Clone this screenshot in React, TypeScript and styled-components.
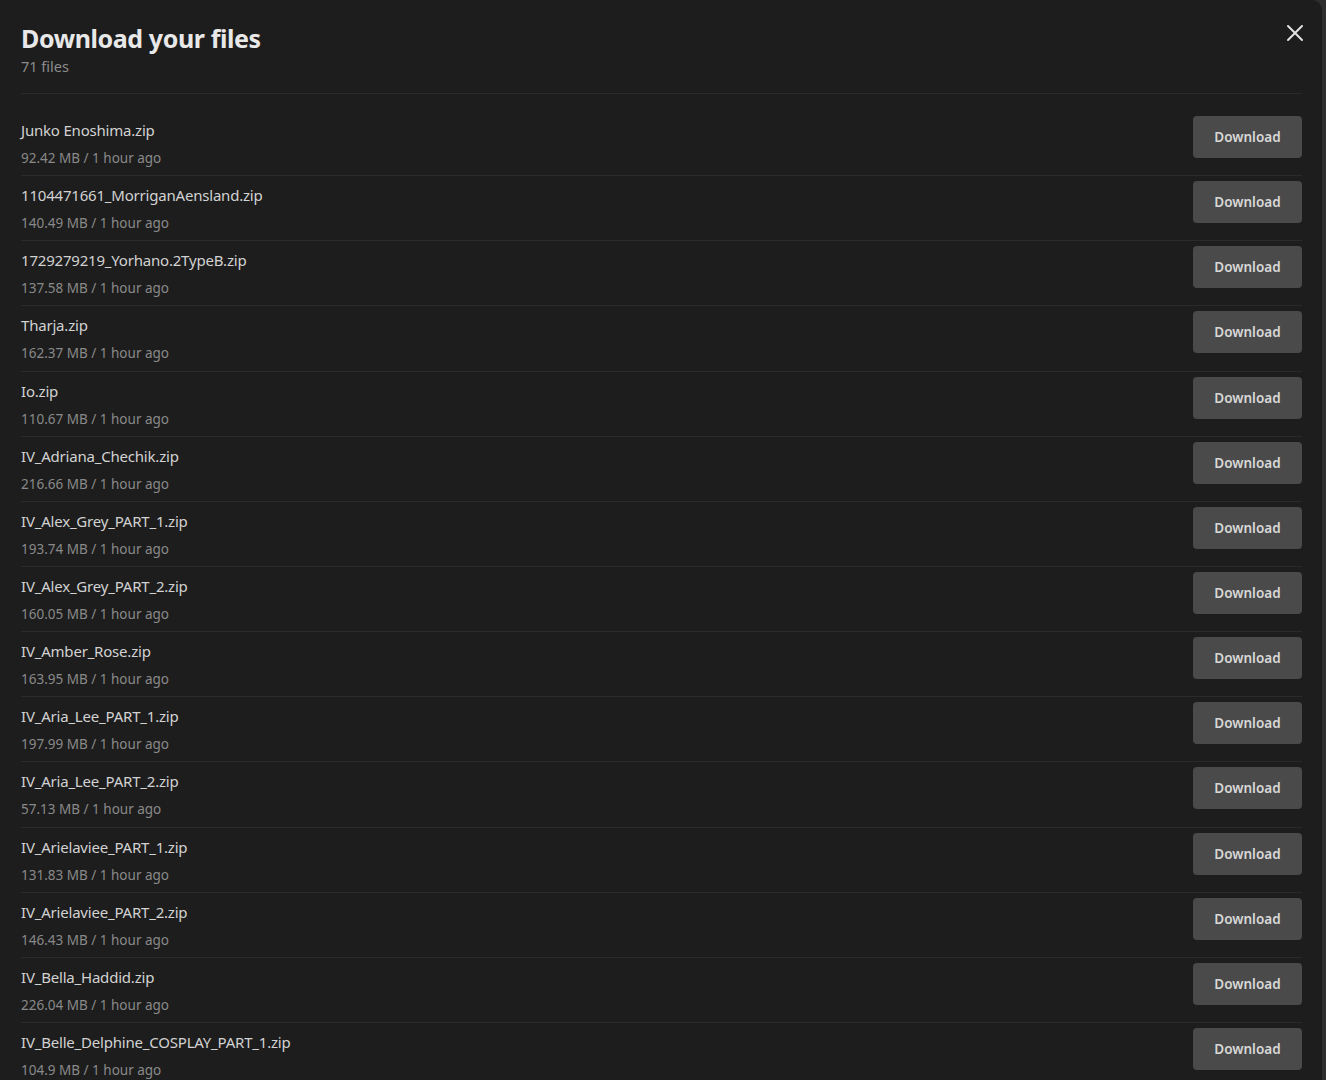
import React from 'react';
import styled, { createGlobalStyle } from 'styled-components';

const GlobalStyle = createGlobalStyle`
    html,
    body {
        margin: 0;
        padding: 0;
        height: 100%;
        overflow: hidden;
        background: #2e2e2e;
    }

    * {
        box-sizing: border-box;
    }
`;

const Modal = styled.div`
    width: 1322px;
    height: 100vh;
    background: #1d1d1d;
    border-top-right-radius: 10px;
    padding: 0 20px 0 21px;
    overflow: hidden;
    font-family: 'Noto Sans', 'Open Sans', sans-serif;
    color: #d4d4d4;
`;

const Header = styled.div`
    display: flex;
    justify-content: space-between;
    align-items: flex-start;
    padding: 21px 0 17px;
    border-bottom: 1px solid #2a2a2a;
`;

const Title = styled.h2`
    margin: 0;
    font-size: 25px;
    line-height: 34px;
    font-weight: 700;
    color: #e8e8e8;
    letter-spacing: -0.4px;
`;

const Count = styled.div`
    margin-top: 1px;
    font-size: 14.5px;
    line-height: 20px;
    color: #8c8c8c;
`;

const CloseButton = styled.button`
    margin: 3px -2px 0 0;
    padding: 0;
    width: 18px;
    height: 18px;
    border: none;
    background: none;
    color: #e2e2e2;
    cursor: pointer;
    display: flex;
    align-items: center;
    justify-content: center;
`;

const List = styled.ul`
    list-style: none;
    margin: 0;
    padding: 17px 0 0;
`;

const Row = styled.li`
    display: flex;
    justify-content: space-between;
    align-items: flex-start;
    height: 65.15px;
    padding-top: 5px;

    & + & {
        border-top: 1px solid #2a2a2a;
    }

    &:first-child {
        height: 64.15px;
    }
`;

const FileInfo = styled.div`
    padding-top: 2px;
    min-width: 0;
`;

const FileName = styled.div`
    font-size: 15px;
    line-height: 24px;
    color: #d2d2d2;
    letter-spacing: -0.2px;
`;

const FileMeta = styled.div`
    margin-top: 2px;
    font-size: 13.5px;
    line-height: 28px;
    color: #898989;
`;

const DownloadButton = styled.button`
    width: 109px;
    height: 42px;
    border: none;
    border-radius: 4px;
    background: #4a4a4a;
    color: #d8d8d8;
    font-family: 'Noto Sans', 'Open Sans', sans-serif;
    font-size: 13.5px;
    font-weight: 600;
    cursor: pointer;
    flex-shrink: 0;
`;

interface IFile {
    name: string;
    size: string;
}

const files: IFile[] = [
    { name: 'Junko Enoshima.zip', size: '92.42 MB' },
    { name: '1104471661_MorriganAensland.zip', size: '140.49 MB' },
    { name: '1729279219_Yorhano.2TypeB.zip', size: '137.58 MB' },
    { name: 'Tharja.zip', size: '162.37 MB' },
    { name: 'Io.zip', size: '110.67 MB' },
    { name: 'IV_Adriana_Chechik.zip', size: '216.66 MB' },
    { name: 'IV_Alex_Grey_PART_1.zip', size: '193.74 MB' },
    { name: 'IV_Alex_Grey_PART_2.zip', size: '160.05 MB' },
    { name: 'IV_Amber_Rose.zip', size: '163.95 MB' },
    { name: 'IV_Aria_Lee_PART_1.zip', size: '197.99 MB' },
    { name: 'IV_Aria_Lee_PART_2.zip', size: '57.13 MB' },
    { name: 'IV_Arielaviee_PART_1.zip', size: '131.83 MB' },
    { name: 'IV_Arielaviee_PART_2.zip', size: '146.43 MB' },
    { name: 'IV_Bella_Haddid.zip', size: '226.04 MB' },
    { name: 'IV_Belle_Delphine_COSPLAY_PART_1.zip', size: '104.9 MB' }
];

const CloseIcon = () => (
    <svg width="18" height="18" viewBox="0 0 18 18" fill="none">
        <path
            d="M2 2L16 16M16 2L2 16"
            stroke="currentColor"
            strokeWidth="2"
            strokeLinecap="round"
        />
    </svg>
);

const App = () => (
    <>
        <GlobalStyle />
        <Modal>
            <Header>
                <div>
                    <Title>Download your files</Title>
                    <Count>71 files</Count>
                </div>
                <CloseButton aria-label="Close">
                    <CloseIcon />
                </CloseButton>
            </Header>
            <List>
                {files.map(file => (
                    <Row key={file.name}>
                        <FileInfo>
                            <FileName>{file.name}</FileName>
                            <FileMeta>{`${file.size} / 1 hour ago`}</FileMeta>
                        </FileInfo>
                        <DownloadButton>Download</DownloadButton>
                    </Row>
                ))}
            </List>
        </Modal>
    </>
);

export default App;
